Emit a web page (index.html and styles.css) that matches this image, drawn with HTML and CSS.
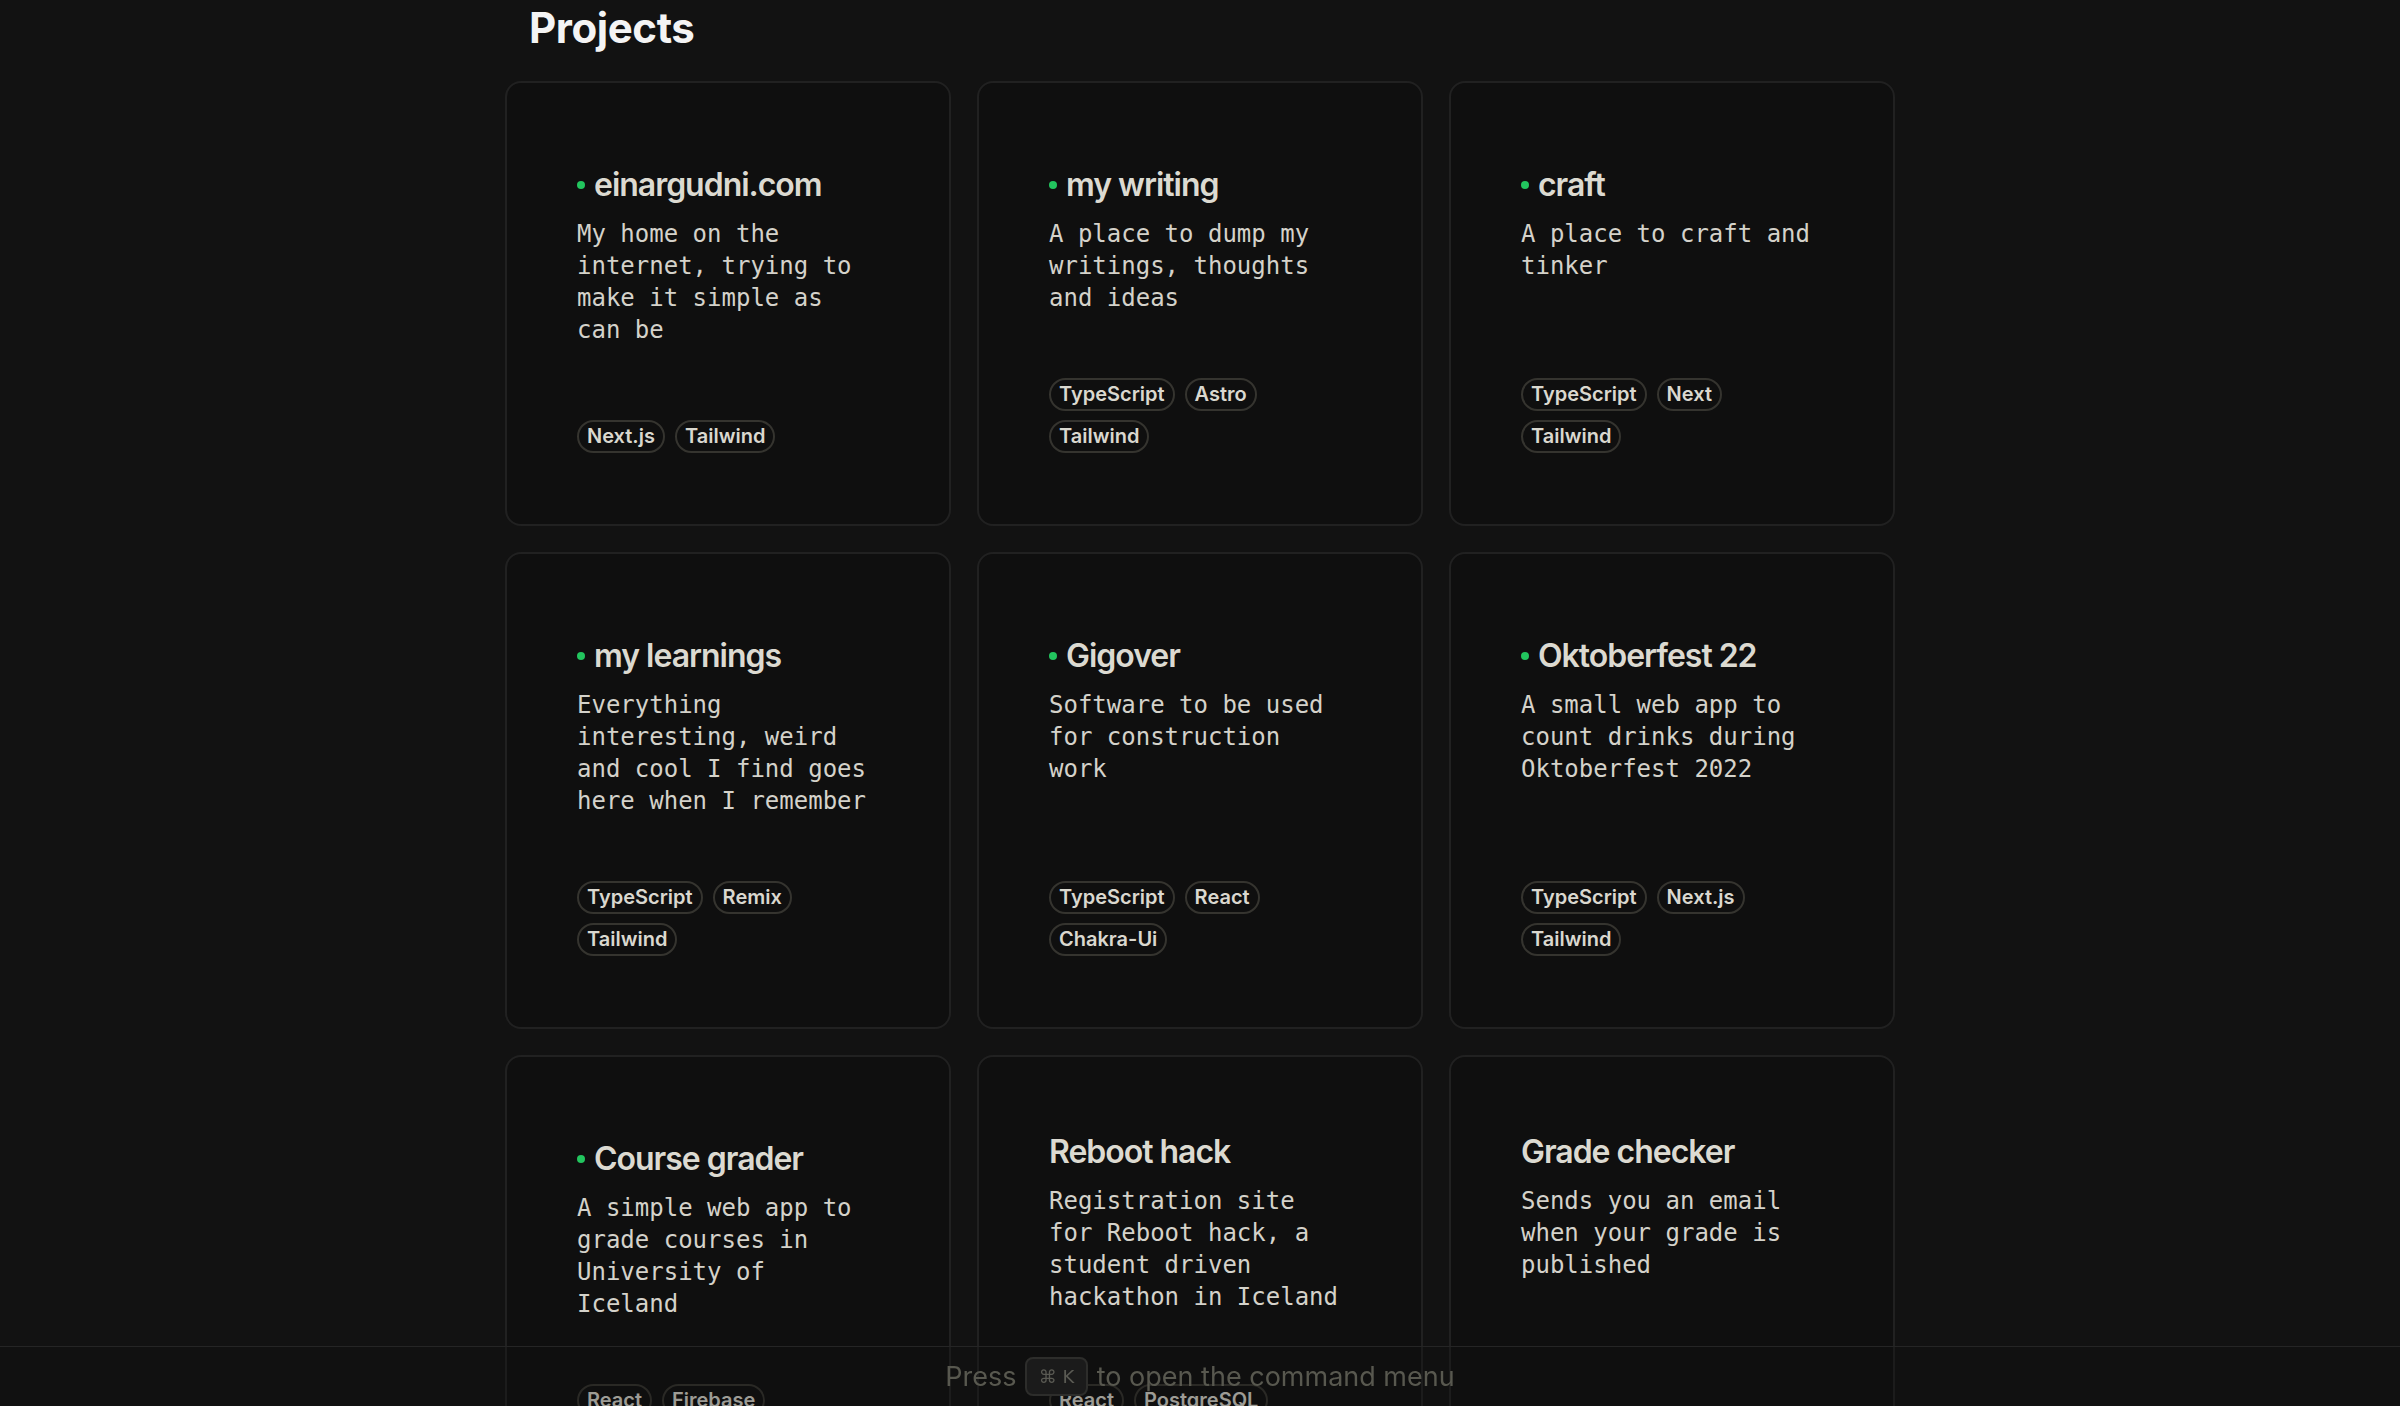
FILE: index.html
```html
<!DOCTYPE html>
<html lang="en">
<head>
<meta charset="utf-8">
<title>Projects</title>
<link rel="stylesheet" href="styles.css">
</head>
<body>
<main class="page">
  <h1 class="heading">Projects</h1>
  <section class="grid">
    <article class="card">
      <h2 class="title live"><span class="dot"></span>einargudni.com</h2>
      <p class="desc">My home on the internet, trying to make it simple as can be</p>
      <ul class="tags"><li class="tag">Next.js</li><li class="tag">Tailwind</li></ul>
    </article>
    <article class="card">
      <h2 class="title live"><span class="dot"></span>my writing</h2>
      <p class="desc">A place to dump my writings, thoughts and ideas</p>
      <ul class="tags"><li class="tag">TypeScript</li><li class="tag">Astro</li><li class="tag">Tailwind</li></ul>
    </article>
    <article class="card">
      <h2 class="title live"><span class="dot"></span>craft</h2>
      <p class="desc">A place to craft and tinker</p>
      <ul class="tags"><li class="tag">TypeScript</li><li class="tag">Next</li><li class="tag">Tailwind</li></ul>
    </article>

    <article class="card">
      <h2 class="title live"><span class="dot"></span>my learnings</h2>
      <p class="desc">Everything interesting, weird and cool I find goes here when I remember</p>
      <ul class="tags"><li class="tag">TypeScript</li><li class="tag">Remix</li><li class="tag">Tailwind</li></ul>
    </article>
    <article class="card">
      <h2 class="title live"><span class="dot"></span>Gigover</h2>
      <p class="desc">Software to be used for construction work</p>
      <ul class="tags"><li class="tag">TypeScript</li><li class="tag">React</li><li class="tag">Chakra-Ui</li></ul>
    </article>
    <article class="card">
      <h2 class="title live"><span class="dot"></span>Oktoberfest 22</h2>
      <p class="desc">A small web app to count drinks during Oktoberfest 2022</p>
      <ul class="tags"><li class="tag">TypeScript</li><li class="tag">Next.js</li><li class="tag">Tailwind</li></ul>
    </article>

    <article class="card">
      <h2 class="title live"><span class="dot"></span>Course grader</h2>
      <p class="desc">A simple web app to grade courses in University of Iceland</p>
      <ul class="tags"><li class="tag">React</li><li class="tag">Firebase</li><li class="tag">Material-UI</li></ul>
    </article>
    <article class="card">
      <h2 class="title">Reboot hack</h2>
      <p class="desc">Registration site for Reboot hack, a student driven hackathon in Iceland</p>
      <ul class="tags"><li class="tag">React</li><li class="tag">PostgreSQL</li><li class="tag">Express</li></ul>
    </article>
    <article class="card">
      <h2 class="title">Grade checker</h2>
      <p class="desc">Sends you an email when your grade is published</p>
      <ul class="tags"><li class="tag">Python</li></ul>
    </article>
  </section>
</main>
<footer class="cmdbar">
  <p class="cmdtext">Press <kbd class="kbd">⌘ K</kbd> to open the command menu</p>
</footer>
</body>
</html>
```

FILE: styles.css
```css
html, body {
  margin: 0;
  padding: 0;
  background: #121212;
}

body {
  font-family: Inter, "Noto Sans", "DejaVu Sans", sans-serif;
  color: #dcdad1;
}

.page {
  width: 1390px;
  margin: 0 auto;
}

.heading {
  margin: 0 0 25px 0;
  padding-left: 24px;
  font-size: 42px;
  line-height: 56px;
  font-weight: 700;
  letter-spacing: -0.01em;
  color: #f4f4f4;
}

.grid {
  display: grid;
  grid-template-columns: repeat(3, 1fr);
  gap: 26px;
  padding-bottom: 120px;
}

.card {
  display: flex;
  flex-direction: column;
  background: #0f0f0f;
  border: 2px solid #212121;
  border-radius: 16px;
  padding: 75px 70px 71px 70px;
  min-width: 0;
}

.title {
  display: flex;
  align-items: center;
  margin: 0 0 13px 0;
  font-size: 32px;
  line-height: 40px;
  font-weight: 600;
  letter-spacing: -0.032em;
  color: #dcdad1;
}

.title.live {
  margin-top: 7px;
}

.dot {
  flex: none;
  width: 8px;
  height: 8px;
  border-radius: 50%;
  background: #22c55e;
  margin-right: 9px;
}

.desc {
  margin: 0;
  font-family: "DejaVu Sans Mono", "Liberation Mono", monospace;
  font-size: 24px;
  line-height: 32px;
  max-width: 20.5ch;
  color: #d4d2ca;
}

.tags {
  list-style: none;
  margin: auto 0 0 0;
  padding: 64px 0 0 0;
  display: flex;
  flex-wrap: wrap;
  gap: 9px 10px;
}

.tag {
  border: 2px solid #35342f;
  border-radius: 999px;
  padding: 0 8px;
  font-size: 20px;
  line-height: 29px;
  font-weight: 600;
  color: #dad8cf;
  background: #0f0f0f;
}

.cmdbar {
  position: fixed;
  left: 0;
  right: 0;
  bottom: 0;
  height: 59px;
  border-top: 1px solid #252525;
  background: rgba(17, 17, 17, 0.3);
  display: flex;
  align-items: center;
  justify-content: center;
}

.cmdtext {
  margin: 0;
  padding-top: 4px;
  font-size: 27px;
  font-weight: 400;
  color: #58584f;
  white-space: nowrap;
}

.kbd {
  display: inline-block;
  vertical-align: middle;
  box-sizing: border-box;
  height: 39px;
  width: 63px;
  margin: 0 1px;
  line-height: 35px;
  text-align: center;
  font-family: "DejaVu Sans", Inter, sans-serif;
  font-size: 18px;
  color: #5a5a53;
  background: #1b1b1b;
  border: 2px solid #2d2d2b;
  border-radius: 8px;
  position: relative;
  top: -2px;
}
```
